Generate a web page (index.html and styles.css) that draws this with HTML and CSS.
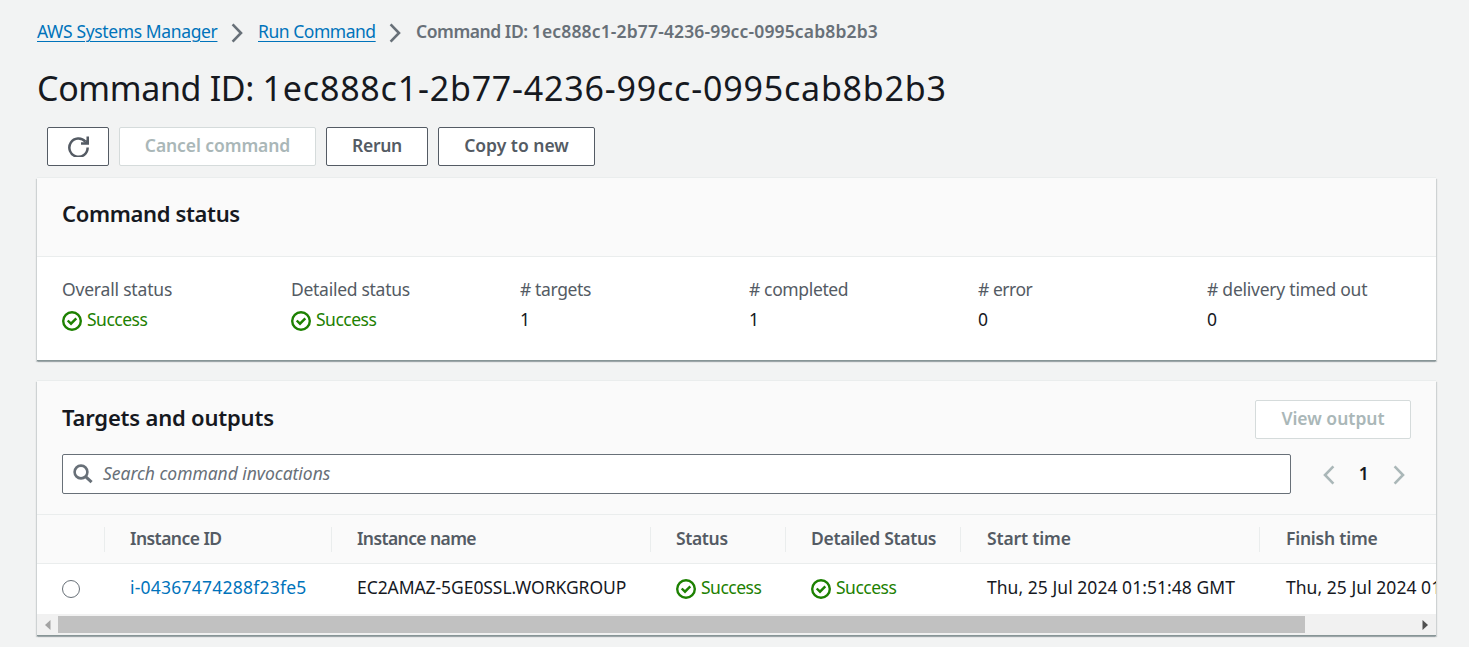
FILE: index.html
```html
<!DOCTYPE html>
<html lang="en">
<head>
<meta charset="utf-8">
<title>Command ID: 1ec888c1-2b77-4236-99cc-0995cab8b2b3</title>
<link rel="stylesheet" href="styles.css">
</head>
<body>
<svg class="defs" aria-hidden="true">
  <symbol id="chevron" viewBox="0 0 12 20"><path d="M1.6 1.4 10 10 1.6 18.6" fill="none" stroke="currentColor" stroke-width="2.6"/></symbol>
  <symbol id="success" viewBox="0 0 20 20"><circle cx="10" cy="10" r="8.8" fill="none" stroke="currentColor" stroke-width="2.4"/><path d="M5.7 9.5 9 12.7 14.3 7.4" fill="none" stroke="currentColor" stroke-width="2.4"/></symbol>
</svg>
<main class="page">
  <nav class="breadcrumbs">
    <a href="#" class="bc-root">AWS Systems Manager</a>
    <svg class="bc-sep"><use href="#chevron"/></svg>
    <a href="#" class="bc-run">Run Command</a>
    <svg class="bc-sep"><use href="#chevron"/></svg>
    <span class="bc-current">Command ID: <span class="bc-uuid">1ec888c1-2b77-4236-99cc-0995cab8b2b3</span></span>
  </nav>
  <h1 class="title">Command ID: <span class="uuid">1ec888c1-2b77-4236-99cc-0995cab8b2b3</span></h1>
  <div class="actions">
    <button class="btn btn-refresh" aria-label="Refresh"><svg class="refresh" viewBox="0 0 20 20"><path d="M16.6 5.4A8.7 8.7 0 1 0 18.7 11" fill="none" stroke="currentColor" stroke-width="2.4"/><path d="M12.4 7.2H18.8V.4" fill="none" stroke="currentColor" stroke-width="2.4"/><path d="M14.5 7.5 18.5 3v4.5z" fill="currentColor"/></svg></button>
    <button class="btn btn-cancel" disabled><span>Cancel command</span></button>
    <button class="btn btn-rerun"><span>Rerun</span></button>
    <button class="btn btn-copy"><span>Copy to new</span></button>
  </div>

  <section class="panel">
    <header class="status-head"><h2 class="h-status">Command status</h2></header>
    <dl class="status-grid">
      <div><dt class="l-overall">Overall status</dt><dd class="ok"><svg class="ok-icon"><use href="#success"/></svg><span>Success</span></dd></div>
      <div><dt class="l-detailed">Detailed status</dt><dd class="ok"><svg class="ok-icon"><use href="#success"/></svg><span>Success</span></dd></div>
      <div><dt># targets</dt><dd>1</dd></div>
      <div><dt># completed</dt><dd>1</dd></div>
      <div><dt class="l-error"># error</dt><dd>0</dd></div>
      <div><dt class="l-delivery"># delivery timed out</dt><dd>0</dd></div>
    </dl>
  </section>

  <section class="panel">
    <header class="targets-head">
      <div class="targets-bar">
        <h2 class="h-targets">Targets and outputs</h2>
        <button class="btn btn-view" disabled><span>View output</span></button>
      </div>
      <div class="filter-bar">
        <div class="search">
          <svg class="search-icon" viewBox="0 0 20 20"><circle cx="8" cy="8" r="6.4" fill="none" stroke="currentColor" stroke-width="2.6"/><path d="M12.6 12.6 18.6 18.2" stroke="currentColor" stroke-width="3"/></svg>
          <span class="placeholder">Search command invocations</span>
        </div>
        <div class="pager">
          <svg class="pg prev"><use href="#chevron"/></svg>
          <b>1</b>
          <svg class="pg"><use href="#chevron"/></svg>
        </div>
      </div>
    </header>
    <div class="table">
      <div class="tr th-row">
        <div class="th"></div>
        <div class="th"><span class="t-id">Instance ID</span></div>
        <div class="th"><span class="t-name">Instance name</span></div>
        <div class="th"><span class="t-status">Status</span></div>
        <div class="th"><span class="t-detail">Detailed Status</span></div>
        <div class="th late"><span class="t-start">Start time</span></div>
        <div class="th late"><span class="t-finish">Finish time</span></div>
      </div>
      <div class="tr td-row">
        <div class="td"><span class="radio"></span></div>
        <div class="td"><a href="#" class="id-link">i-04367474288f23fe5</a></div>
        <div class="td"><span class="host">EC2AMAZ-5GE0SSL.WORKGROUP</span></div>
        <div class="td ok"><svg class="ok-icon"><use href="#success"/></svg><span>Success</span></div>
        <div class="td ok"><svg class="ok-icon"><use href="#success"/></svg><span>Success</span></div>
        <div class="td late"><span class="time">Thu, 25 Jul 2024 01:51:48 GMT</span></div>
        <div class="td late"><span class="time">Thu, 25 Jul 2024 01</span></div>
      </div>
    </div>
    <div class="scrollbar">
      <svg class="arrow dim" viewBox="0 0 6 10"><path d="M5.5 0v10L0 5z" fill="currentColor"/></svg>
      <div class="track"><div class="thumb"></div></div>
      <svg class="arrow" viewBox="0 0 6 10"><path d="M.5 0v10L6 5z" fill="currentColor"/></svg>
    </div>
  </section>
</main>
</body>
</html>
```
FILE: styles.css
```css
* { box-sizing: border-box; }
body {
  margin: 0;
  height: 647px;
  overflow: hidden;
  background: #f2f3f3;
  color: #16191f;
  font: 17.5px/22px "Noto Sans", "Open Sans", sans-serif;
  letter-spacing: -0.37px;
}
.defs { position: absolute; width: 0; height: 0; }
h1, h2, dl, dd { margin: 0; }
a { color: #0073bb; }
span, h2, a { white-space: nowrap; }
.page { padding: 20px 33px 0 37px; }

.breadcrumbs { display: flex; align-items: flex-start; height: 24px; }
.breadcrumbs a { text-decoration: underline; text-decoration-thickness: 1px; text-underline-offset: 3px; }
.bc-root { width: 180px; }
.bc-run { width: 117px; letter-spacing: -0.47px; }
.bc-sep { width: 12px; height: 20px; margin: 3px 15px 0 14px; flex: none; color: #687078; }
.bc-current { color: #687078; font-weight: 600; letter-spacing: -0.45px; }
.bc-uuid { letter-spacing: 0.15px; }

.title { margin-top: 21px; height: 46px; font-size: 34px; line-height: 46px; font-weight: 400; letter-spacing: -0.35px; }
.uuid { letter-spacing: 0.79px; }

.actions { display: flex; gap: 10px; margin: 16px 0 12px 10px; }
.btn {
  height: 39px; padding: 0 0 3px; background: #fff; border: 1px solid #545b64; border-radius: 2px;
  color: #545b64; font: 600 17.5px/22px "Noto Sans", "Open Sans", sans-serif;
  display: flex; align-items: center; justify-content: center;
}
.btn:disabled { color: #aab7b8; border-color: #d5dbdb; }
.btn-refresh { width: 62px; }
.btn-cancel { width: 197px; letter-spacing: -0.09px; }
.btn-rerun { width: 102px; letter-spacing: -0.3px; }
.btn-copy { width: 157px; }
.btn-view { width: 156px; }
.refresh { width: 21px; height: 21px; margin-top: 2px; }

.panel {
  background: #fff; margin-bottom: 20px;
  box-shadow: 0 1px 0 0 rgba(0,28,36,.1), 1px 1px 1px 0 rgba(0,28,36,.15), -1px 1px 1px 0 rgba(0,28,36,.15), 0 -1px 0 0 #eaeded;
  border-bottom: 1px solid #879596;
}
h2 { font-size: 22px; line-height: 28px; font-weight: 600; }
.status-head { height: 79px; padding: 21px 25px 0; background: #fafafa; border-bottom: 1px solid #eaeded; }
.h-status { letter-spacing: -0.35px; }
.status-grid { display: grid; grid-template-columns: repeat(6, 229px); height: 103px; padding: 21px 0 0 25px; }
dt { color: #545b64; }
dd { margin-top: 8px; }
.l-overall { letter-spacing: -0.19px; }
.l-detailed { letter-spacing: -0.28px; }
.l-error { letter-spacing: -0.48px; }
.l-delivery { letter-spacing: -0.24px; }
.ok { color: #1d8102; display: flex; align-items: flex-start; letter-spacing: -0.51px; }
.ok-icon { width: 20px; height: 20px; margin: 3px 5px 0 0; flex: none; }

.targets-head { height: 134px; padding: 19px 25px 0; background: #fafafa; border-bottom: 1px solid #eaeded; }
.targets-bar { display: flex; justify-content: space-between; }
.h-targets { margin-top: 3px; letter-spacing: -0.2px; }
.filter-bar { display: flex; margin-top: 15px; }
.search { width: 1229px; height: 40px; border: 1px solid #687078; border-radius: 2px; background: #fff; display: flex; align-items: center; padding-left: 10px; }
.search-icon { width: 20px; height: 20px; color: #687078; }
.placeholder { margin: 0 0 2px 10px; color: #687078; font-style: italic; letter-spacing: -0.04px; }
.pager { display: flex; align-items: center; padding-left: 32px; }
.pg { width: 12px; height: 20px; color: #aab7b8; margin-top: 2px; }
.prev { transform: scaleX(-1); }
.pager b { width: 57px; margin: 0 1px 2px 0; text-align: center; font-weight: 600; }

.table { overflow: hidden; }
.tr { display: grid; grid-template-columns: 68px 227px 319px 135px 175px 299px 176px; }
.th-row { height: 49px; background: #fafafa; border-bottom: 1px solid #eaeded; padding: 12px 0 11px; }
.th { border-right: 1px solid #eaeded; padding-left: 25px; color: #545b64; font-weight: 600; }
.th:last-child { border-right: 0; }
.t-id { letter-spacing: -0.55px; }
.t-name { letter-spacing: -0.6px; }
.t-detail { letter-spacing: -0.32px; }
.t-start { letter-spacing: -0.15px; }
.t-finish { letter-spacing: -0.22px; }
.td-row { height: 50px; padding-top: 12px; }
.td { padding-left: 25px; display: flex; align-items: flex-start; }
.late { padding-left: 26px; }
.id-link { text-decoration: none; letter-spacing: 0.23px; }
.host { letter-spacing: -0.07px; }
.time { letter-spacing: 0.04px; }
.radio { width: 18px; height: 18px; border: 1px solid #687078; border-radius: 50%; margin-top: 4px; background: #fff; }

.scrollbar { height: 21px; background: #f1f1f1; display: flex; align-items: center; justify-content: space-between; padding: 0 8px; }
.arrow { width: 6px; height: 10px; color: #505050; }
.dim { color: #a3a3a3; }
.track { flex: 1; margin: 0 7px; }
.thumb { width: 1247px; height: 17px; background: #c1c1c1; }
```
